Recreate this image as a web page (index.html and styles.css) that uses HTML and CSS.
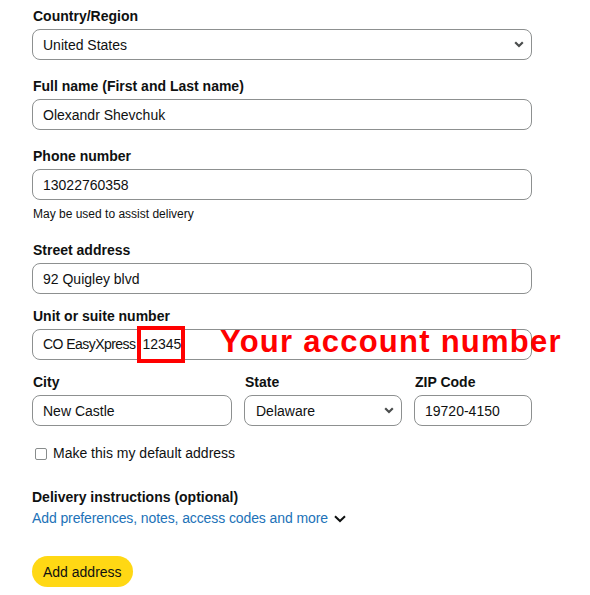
FILE: index.html
```html
<!DOCTYPE html>
<html lang="en">
<head>
<meta charset="utf-8">
<title>Add address</title>
<link rel="stylesheet" href="styles.css">
</head>
<body>
<form class="form">
  <div class="group">
    <label class="label">Country/Region</label>
    <div class="field select">
      <span class="value">United States</span>
      <svg class="chev" width="10" height="7" viewBox="0 0 10 7"><path d="M1.2 1.3 5 5 8.8 1.3" fill="none" stroke="#4a4d4d" stroke-width="2.2"/></svg>
    </div>
  </div>
  <div class="group">
    <label class="label">Full name (First and Last name)</label>
    <div class="field"><span class="value">Olexandr Shevchuk</span></div>
  </div>
  <div class="group group-hint">
    <label class="label">Phone number</label>
    <div class="field"><span class="value">13022760358</span></div>
    <p class="hint">May be used to assist delivery</p>
  </div>
  <div class="group group-tight">
    <label class="label">Street address</label>
    <div class="field"><span class="value">92 Quigley blvd</span></div>
  </div>
  <div class="group group-tight">
    <label class="label">Unit or suite number</label>
    <div class="field annotated">
      <span class="value"><span class="tight">CO EasyXpress</span><span class="mark">12345</span></span>
      <span class="note">Your account number</span>
    </div>
  </div>
  <div class="row">
    <div class="col">
      <label class="label">City</label>
      <div class="field"><span class="value">New Castle</span></div>
    </div>
    <div class="col">
      <label class="label">State</label>
      <div class="field select state">
        <span class="value">Delaware</span>
        <svg class="chev" width="10" height="7" viewBox="0 0 10 7"><path d="M1.2 1.3 5 5 8.8 1.3" fill="none" stroke="#4a4d4d" stroke-width="2.2"/></svg>
      </div>
    </div>
    <div class="col">
      <label class="label">ZIP Code</label>
      <div class="field"><span class="value">19720-4150</span></div>
    </div>
  </div>
  <div class="check">
    <span class="box"></span>
    <span>Make this my default address</span>
  </div>
  <div class="delivery">
    <h3 class="label plain">Delivery instructions (optional)</h3>
    <a class="link" href="#">Add preferences, notes, access codes and more
      <svg class="link-chev" width="12" height="8" viewBox="0 0 12 8"><path d="M1 1.2 6 6 11 1.2" fill="none" stroke="#0f1111" stroke-width="2"/></svg>
    </a>
  </div>
  <button type="button" class="btn">Add address</button>
</form>
</body>
</html>
```

FILE: styles.css
```css
* { box-sizing: border-box; }

body {
  margin: 0;
  background: #ffffff;
  color: #0f1111;
  font-family: "Liberation Sans", Arial, sans-serif;
  font-size: 14px;
}

.form {
  width: 500px;
  margin-left: 32px;
  padding-top: 7px;
}

.group { margin-bottom: 17px; }
.group-hint { margin-bottom: 19px; }
.group-tight { margin-bottom: 13px; }

.label {
  display: block;
  margin: 0 0 3px;
  padding-left: 1px;
  font-size: 14px;
  line-height: 19px;
  font-weight: 700;
}

.label.plain { padding-left: 0; margin: 0; }

.field {
  position: relative;
  display: flex;
  align-items: center;
  height: 31px;
  padding: 0 10px;
  border: 1px solid #8d9090;
  border-radius: 8px;
  background: #fff;
  font-size: 14px;
}

.value { flex: 1; white-space: nowrap; }

.select { padding-right: 7px; }
.chev { flex: none; }

.hint {
  margin: 6px 0 0;
  padding-left: 1px;
  font-size: 12px;
  line-height: 16px;
}

.tight { letter-spacing: -0.55px; }

.mark {
  display: inline-block;
  margin-left: 2px;
  padding: 0 0 0 1px;
  border: 4px solid #ff0000;
  line-height: 29px;
}

.note {
  position: absolute;
  left: 187px;
  top: -4px;
  color: #ff0000;
  font-size: 31px;
  line-height: 31px;
  font-weight: 700;
  letter-spacing: 1.25px;
  white-space: nowrap;
}

.row {
  display: grid;
  grid-template-columns: 200px 158px 118px;
  column-gap: 12px;
}

.state { padding-left: 11px; }

.check {
  display: flex;
  align-items: center;
  margin-top: 18px;
  padding-left: 3px;
  line-height: 19px;
}

.box {
  width: 12px;
  height: 12px;
  margin-right: 6px;
  border: 1px solid #888c8c;
  border-radius: 2px;
  background: #fff;
}

.delivery { margin-top: 25px; }

.link {
  display: inline-flex;
  align-items: center;
  gap: 6px;
  margin-top: 2px;
  color: #2172b8;
  text-decoration: none;
  line-height: 19px;
  letter-spacing: -0.1px;
}

.link-chev { margin-top: 1px; }

.btn {
  display: block;
  margin-top: 28px;
  height: 31px;
  padding: 0 11px;
  border: none;
  border-radius: 16px;
  background: #ffd814;
  color: #0f1111;
  font-family: "Liberation Sans", Arial, sans-serif;
  font-size: 14px;
}
```
